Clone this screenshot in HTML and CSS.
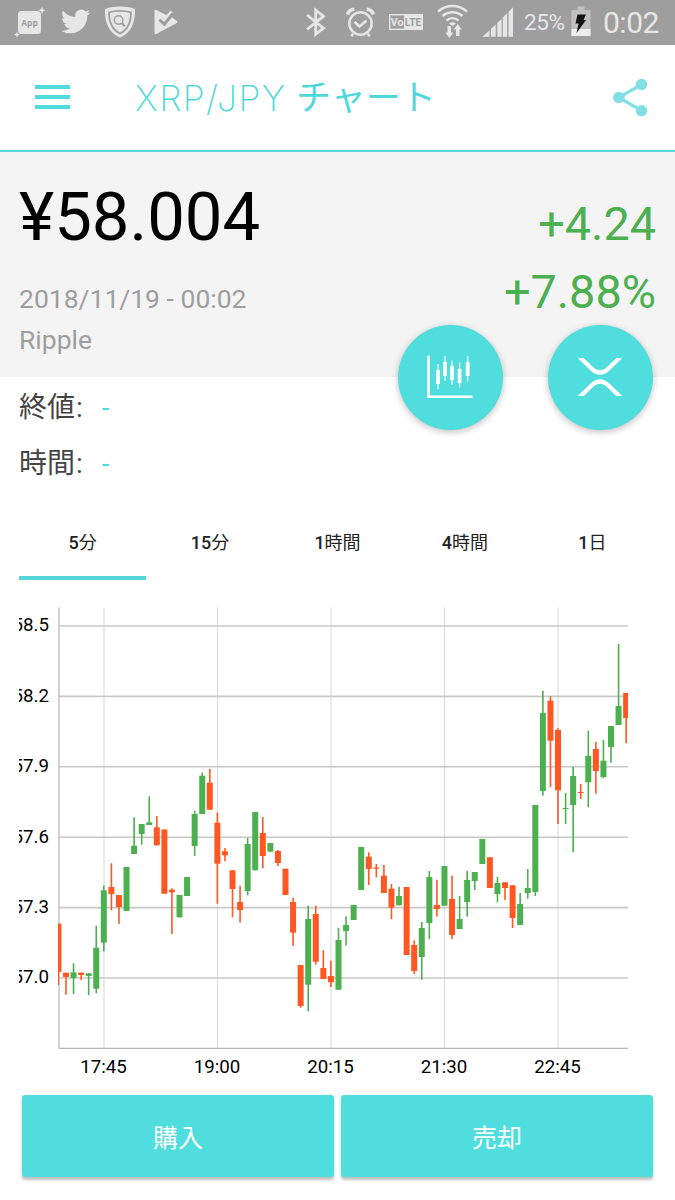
FILE: index.html
```html
<!DOCTYPE html>
<html lang="ja">
<head>
  <meta charset="UTF-8"/>
  <meta name="viewport" content="width=device-width, initial-scale=1.0"/>
  <title>XRP/JPY チャート</title>
  <link rel="stylesheet" href="styles.css">
</head>
<body>
  <div class="statusbar">
    <div class="status-left">
      <svg width="46" height="45" viewBox="14 0 46 45" fill="#e6e6e6">
        <rect x="18" y="11" width="23" height="23" rx="3.5"/>
        <path d="M42 6.5l1 2.7 2.5 1-2.5 1-1 2.7-1-2.7-2.5-1 2.5-1zM17 31.500l.9 2.2 2 .9-2 .9-.9 2.200-.9-2.200-2-.9 2-.9z"/>
        <text class="app-label" x="29.500" y="25.500" text-anchor="middle" textLength="16.500" lengthAdjust="spacingAndGlyphs">App</text>
      </svg>
      <svg width="43" height="45" viewBox="60 0 43 45" fill="#e6e6e6">
        <path transform="translate(61 6.8) scale(1.22)" d="M23.953 4.570a10 10 0 01-2.825.775 4.958 4.958 0 002.163-2.723c-.951.555-2.005.959-3.127 1.184a4.920 4.920 0 00-8.384 4.482C7.690 8.095 4.067 6.130 1.640 3.162a4.822 4.822 0 00-.666 2.475c0 1.710.870 3.213 2.188 4.096a4.904 4.904 0 01-2.228-.616v.060a4.923 4.923 0 003.946 4.827 4.996 4.996 0 01-2.212.085 4.936 4.936 0 004.604 3.417 9.867 9.867 0 01-6.102 2.105c-.390 0-.779-.023-1.170-.067a13.995 13.995 0 007.557 2.209c9.053 0 13.998-7.496 13.998-13.985 0-.210 0-.420-.015-.630A9.935 9.935 0 0024 4.590z"/>
      </svg>
      <svg width="50" height="45" viewBox="103 0 50 45" fill="none">
        <path d="M120 6.500c5 0 10 .7 15 2.500.4 13-3.500 24-15 28.500C108.500 33 104.600 22 105 9c5-1.800 10-2.500 15-2.500z" fill="#e6e6e6"/>
        <path d="M120 10.800c4 0 7.500.5 11 1.500 0 9.500-3 17.500-11 21.200-8-3.700-11-11.700-11-21.200 3.500-1 7-1.500 11-1.500z" stroke="#9e9e9e" stroke-width="1.800"/>
        <circle cx="118.600" cy="20" r="4.300" stroke="#9e9e9e" stroke-width="1.500"/>
        <path d="M121.800 23.200l3 3" stroke="#9e9e9e" stroke-width="2"/>
      </svg>
      <svg width="30" height="45" viewBox="153 0 30 45" fill="none">
        <path d="M154.500 11c0-1 .8-1.400 1.700-1l10.300 5 4-4.500 2.500 2-1.500 4.500 4.800 3.500c1.400.8 1.400 2 0 2.800L156.200 34c-.9.400-1.700 0-1.700-1z" fill="#e6e6e6"/>
        <path d="M159.300 19.500l5 4.800 8.700-10.800" stroke="#9e9e9e" stroke-width="3"/>
      </svg>
    </div>
    <div class="status-right">
      <svg width="40" height="45" viewBox="305 0 40 45" fill="none" stroke="#e6e6e6" stroke-width="2.800">
        <path d="M307 15l16.500 13.200-7.800 6V10.200l7.800 6L307 29.500"/>
      </svg>
      <svg width="43" height="45" viewBox="345 0 43 45" fill="none" stroke="#e6e6e6">
        <circle cx="360.500" cy="23.500" r="11.200" stroke-width="2.500"/>
        <path d="M354.500 22l5 4.500 7-6" stroke-width="2.500"/>
        <path d="M347.500 14.500c1-3 3.500-5 6.800-5.200M373.500 14.500c-1-3-3.500-5-6.800-5.200" stroke-width="3.600"/>
        <path d="M353 33.500l-1.500 3M368 33.500l1.500 3" stroke-width="2.500"/>
      </svg>
      <svg width="48" height="45" viewBox="388 0 48 45">
        <rect x="389.700" y="14.700" width="32.600" height="14.600" fill="none" stroke="#e6e6e6" stroke-width="1.400"/>
        <rect x="404" y="14.700" width="18.300" height="14.600" fill="#e6e6e6"/>
        <text class="volte" x="390.800" y="26.400" fill="#e6e6e6" textLength="12.500" lengthAdjust="spacingAndGlyphs">Vo</text>
        <text class="volte" x="404.800" y="26.400" fill="#9e9e9e" textLength="16.500" lengthAdjust="spacingAndGlyphs">LTE</text>
      </svg>
      <svg width="45" height="45" viewBox="436 0 45 45" fill="none" stroke="#e6e6e6" stroke-width="2.500">
        <path d="M438 11.500c8.500-7.300 20.500-7.300 29 0M442.500 16c6-5 14-5 20 0M446.500 20.500c3.600-3 8.400-3 12 0"/>
        <path d="M449 23.500q3.500-2.300 7 0l-3.500 2.500z" fill="#e6e6e6" stroke="none"/>
        <path d="M447.500 26h3.500v6.500h2.300l-4 5.500-4-5.500h2.200zM456 36h3.500v-6.500h2.300l-4-5.500-4 5.500h2.200z" fill="#e6e6e6" stroke="none"/>
      </svg>
      <svg width="43" height="45" viewBox="481 0 43 45" fill="#e6e6e6">
        <path d="M482.500 36.700l7-6.500v6.500zM491 29l4.700-4.500v12.200H491zM497.300 23l4.300-4.300v18h-4.300zM502.800 17.500l4.400-4.400v23.600h-4.400zM508.600 11.700l4.400-4.500v29.500h-4.400z"/>
      </svg>
      <span class="percent">25%</span>
      <svg width="33" height="45" viewBox="570 0 33 45">
        <path d="M571.500 10h6V6.500h7V10h6v26h-19z" fill="#bfbfbf"/>
        <rect x="571.500" y="29" width="19" height="7" fill="#eee"/>
        <path d="M577.500 14.500h8.500l-2.500 5.500h2.500l-9.500 13 2.200-9.500h-3.200z" fill="#111"/>
      </svg>
      <span class="clock">0:02</span>
    </div>
  </div>

  <header>
    <svg class="menu" width="35" height="24" viewBox="0 0 35 24" fill="#4fdcdc">
      <path d="M0 0h35v4H0zM0 10h35v4H0zM0 20h35v4H0z"/>
    </svg>
    <h1><span class="pair">XRP/JPY</span>チャート</h1>
    <svg class="share" width="36" height="40" viewBox="612 77 36 40" fill="#82dfe4">
      <path d="M641.500 84.500L618.700 97.500l22.800 13.200" fill="none" stroke="#82dfe4" stroke-width="3.200"/>
      <circle cx="641.500" cy="84.500" r="5.700"/>
      <circle cx="618.800" cy="97.500" r="5.800"/>
      <circle cx="641.500" cy="110.700" r="5.700"/>
    </svg>
  </header>

  <section class="summary">
    <div>
      <div class="price">¥58.004</div>
      <div class="sub">2018/11/19 - 00:02</div>
      <div class="sub name">Ripple</div>
    </div>
    <div class="change">
      <div>+4.24</div>
      <div>+7.88%</div>
    </div>
    <div class="fabs">
      <div class="fab">
        <svg width="46" height="44" viewBox="427 355 46 44" fill="#fff">
          <path d="M427.300 355.700h2.600v39.700h42.500v2.600h-45.100z"/>
          <path d="M437.400 364h1.200v25.300h-1.200zM444.400 356h1.200v25h-1.200zM451.400 360.700h1.200V385h-1.200zM459 362.700h1.200v24.600H459zM467.100 356h1.200v25.300h-1.200z"/>
          <path d="M436.100 370h3.800v14h-3.800zM443.100 362h3.800v14h-3.800zM450.100 366h3.800v14h-3.800zM457.700 369h3.800v14h-3.800zM465.800 362h3.800v14h-3.800z"/>
        </svg>
      </div>
      <div class="fab">
        <svg width="46" height="38" viewBox="577 357.700 46 38" fill="none" stroke="#fff" stroke-width="4.200">
          <path d="M577.500 354.500L591 367.800q9 9 18 0l13.500-13.300M577.500 398.900L591 385.600q9-9 18 0l13.500 13.300"/>
        </svg>
      </div>
    </div>
  </section>

  <section class="values">
    <div class="row">終値<span class="colon">:</span><span class="dash">-</span></div>
    <div class="row">時間<span class="colon">:</span><span class="dash">-</span></div>
  </section>

  <nav class="tabs">
    <div class="tab active"><span>5</span>分</div>
    <div class="tab"><span>15</span>分</div>
    <div class="tab"><span>1</span>時間</div>
    <div class="tab"><span>4</span>時間</div>
    <div class="tab"><span>1</span>日</div>
  </nav>

  <svg id="chart" class="chart" width="637" height="485" viewBox="19 600 637 485">
    <defs>
      <clipPath id="plot"><rect x="58" y="600" width="570" height="449"/></clipPath>
    </defs>
    <g id="grid"></g>
    <g id="candles" clip-path="url(#plot)"></g>
  </svg>

  <div class="actions">
    <div class="btn">購入</div>
    <div class="btn">売却</div>
  </div>

  <script>
    const NS = 'http://www.w3.org/2000/svg';
    const grid = document.getElementById('grid');
    const candlesEl = document.getElementById('candles');

    function add(parent, tag, attrs, text) {
      const el = document.createElementNS(NS, tag);
      for (const k in attrs) el.setAttribute(k, attrs[k]);
      if (text) el.textContent = text;
      parent.appendChild(el);
    }

    // Grid + labels
    ['17:45', '19:00', '20:15', '21:30', '22:45'].forEach((t, i) => {
      const x = 104 + i * 113.5;
      add(grid, 'line', { class: 'vline', x1: x, x2: x, y1: 607.5, y2: 1048 });
      add(grid, 'text', { x: x - 0.5, y: 1073.3, 'text-anchor': 'middle' }, t);
    });
    ['58.5', '58.2', '57.9', '57.6', '57.3', '57.0'].forEach((t, i) => {
      const y = 626 + i * 70.4;
      add(grid, 'line', { class: 'hline', x1: 59, x2: 628, y1: y, y2: y });
      add(grid, 'text', { x: 49, y: y + 5.3, 'text-anchor': 'end' }, t);
    });
    add(grid, 'path', { class: 'axis', d: 'M59 607.5V1048.3H628' });

    // up/down, high, body top, body bottom, low
    const candles = [
      ['d',923.7,923.7,972,985], ['d',972.7,972.7,977,994.7], ['u',963.3,972.3,978,994],
      ['d',972.7,972.7,975,980], ['u',973.3,973.3,976,995], ['u',925.7,947.7,988.7,993.3],
      ['u',885.7,890.3,942.7,951.3], ['d',863.3,887,894,910.3], ['d',895,895,907,924],
      ['u',867,867,911,911], ['u',817.3,845.7,854,854], ['u',824,824,834,844.7],
      ['u',796.3,822.3,825,825], ['d',816,827.3,845.3,845.3], ['d',829.5,829.5,893.7,893.7],
      ['d',888.3,889.7,892.3,934], ['u',895,895,917.3,917.3], ['u',877,877,896,896],
      ['u',810.7,814,846,856], ['u',772.7,775.7,814,814], ['d',769,782.7,809.7,809.7],
      ['d',812.7,822.7,863.7,903.7], ['d',848,851.3,855.3,861.3], ['d',870.3,870.3,889,917.3],
      ['d',885.7,902,910,922.7], ['u',838,844,891,895.3], ['u',812,812,870.3,870.3],
      ['d',817,833,856,868.3], ['u',843,843,851.7,851.7], ['d',850,851,863,866],
      ['d',868.7,868.7,895,895], ['d',897.7,902,932.7,946], ['d',965,965,1006,1007.7],
      ['u',905.7,919,984.7,1011.3], ['d',905.7,914,961.7,964.7], ['d',950.3,968,979,979],
      ['d',960.7,976,982.3,987], ['u',928,940,989.7,989.7], ['u',916.3,925,931,945.7],
      ['u',905,905,920,920], ['u',847,847,890,890], ['d',852.3,856.7,869,885],
      ['d',864,867.5,868.7,877.3], ['d',865,875.7,893,893], ['d',884,888.7,907.7,919.3],
      ['u',886.7,896,905.3,905.3], ['d',887,887,955,955], ['d',940.3,945,971,974],
      ['u',922,928,957,979.7], ['u',871,877,923,939], ['d',879.7,905,909,916.7],
      ['u',866,866,905.7,905.7], ['d',875.7,899,935,939], ['u',896,919,929,929],
      ['u',871,880,902,916.7], ['u',872,872,881,890], ['u',839,839,864,864],
      ['d',857.3,857.3,888,888], ['u',877,883,894,902.3], ['d',882.3,882.3,888,900],
      ['d',885.3,885.3,918,928], ['u',893,904,925,925], ['u',869,888,893,898.7],
      ['u',805,805,892,896], ['u',690.7,713,791,795.7], ['d',696.3,700.7,740.7,787.3],
      ['d',728.3,730,790.3,824], ['u',793,808,809,824], ['u',767,776,805,852.3],
      ['d',784,792,793,799], ['u',730.7,755.7,782.3,807.3], ['d',742,749,771,793.7],
      ['u',740,760.7,777,778.3], ['u',726,726,747,762.7], ['u',644,706,725,725],
      ['d',693,693,718,743.3]
    ];
    candles.forEach(([dir, high, top, bottom, low], i) => {
      const x = 58.4 + i * 7.57;
      add(candlesEl, 'rect', { class: dir, x: x - 0.8, y: high, width: 1.6, height: low - high });
      add(candlesEl, 'rect', { class: dir, x: x - 3, y: top, width: 6, height: bottom - top });
    });
  </script>
</body>
</html>
```

FILE: styles.css
```css
* { box-sizing:border-box; }
body { margin:0; width:675px; height:1200px; overflow:hidden; background:#fff; font-family:Roboto,"Noto Sans CJK JP",sans-serif; }
svg { display:block; flex-shrink:0; }

.statusbar { display:flex; justify-content:space-between; height:45px; background:#9e9e9e; color:#e6e6e6; }
.status-left, .status-right { display:flex; line-height:45px; white-space:nowrap; }
.status-left { padding-left:14px; }
.status-right { width:370px; }
.percent { width:46px; font-size:22.5px; letter-spacing:-0.4px; }
.clock { font-size:30px; letter-spacing:-0.5px; }
.app-label { font:bold 9.5px "Open Sans",sans-serif; fill:#9e9e9e; }
.volte { font:bold 11.5px Roboto,sans-serif; }

header { display:flex; align-items:center; height:107px; padding:0 27px 2px 35px; border-bottom:2px solid #5bd5d8; }
h1 { display:flex; flex:1; margin:4px 0 0 65px; font-size:35px; font-weight:400; line-height:50px; color:#4fd8da; white-space:nowrap; }
.pair { width:161px; font-family:Inter,sans-serif; font-size:35.5px; font-weight:200; letter-spacing:1.4px; }

.summary { position:relative; display:flex; justify-content:space-between; height:225px; padding:26px 19px 0; background:#f4f4f4; }
.price { margin-bottom:22px; font-size:67px; line-height:78px; color:#000; }
.sub { font-size:26.5px; line-height:41px; color:#9e9e9e; }
.change { padding-top:12px; font-size:46.8px; line-height:68px; text-align:right; color:#4caf50; }
.fabs { position:absolute; right:22.5px; bottom:-52.5px; display:flex; gap:45px; }
.fab { display:flex; align-items:center; justify-content:center; width:105px; height:105px; border-radius:50%; background:#50dddd; box-shadow:0 2px 7px rgba(0,0,0,0.25); }

.values { padding:3px 19px 0; }
.row { font-size:28px; line-height:56px; color:#444; }
.colon { margin-left:1px; }
.dash { margin-left:19px; color:#4fdcdc; }

.tabs { display:grid; grid-template-columns:repeat(5,1fr); margin:13px 19px 0; }
.tab { height:75px; border-bottom:4px solid transparent; font-size:18px; line-height:75px; text-align:center; color:#222; }
.tab span { font-weight:500; }
.tab.active { border-color:#56d6d9; }

.chart { margin:20px 0 0 19px; }
.chart text { font-size:18.7px; fill:#000; }
.hline { stroke:#c8c8c8; stroke-width:1.6; }
.vline { stroke:#dedede; stroke-width:1.2; }
.axis { fill:none; stroke:#b5b5b5; stroke-width:1.2; }
.u { fill:#4caf50; }
.d { fill:#ff5722; }

.actions { display:grid; grid-template-columns:1fr 1fr; gap:7px; padding:10px 22px; }
.btn { height:82px; padding-top:3px; border-radius:3px; background:#50dddd; box-shadow:0 3px 3px rgba(0,0,0,0.25); font-size:25px; line-height:82px; text-align:center; color:#fff; }
```
